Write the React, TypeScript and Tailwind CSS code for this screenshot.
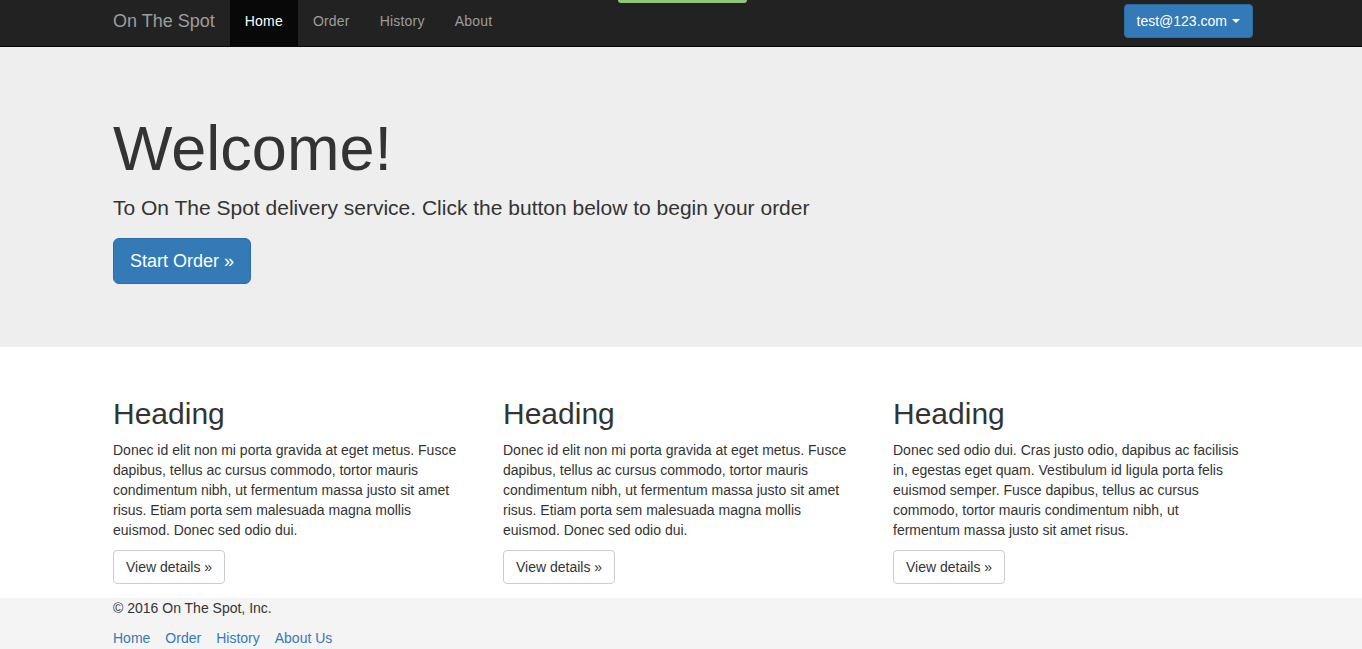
const navLinks = ['Home', 'Order', 'History', 'About'];

const colA = [
  'Donec id elit non mi porta gravida at eget metus. Fusce',
  'dapibus, tellus ac cursus commodo, tortor mauris',
  'condimentum nibh, ut fermentum massa justo sit amet',
  'risus. Etiam porta sem malesuada magna mollis',
  'euismod. Donec sed odio dui.',
];

const colB = [
  'Donec sed odio dui. Cras justo odio, dapibus ac facilisis',
  'in, egestas eget quam. Vestibulum id ligula porta felis',
  'euismod semper. Fusce dapibus, tellus ac cursus',
  'commodo, tortor mauris condimentum nibh, ut',
  'fermentum massa justo sit amet risus.',
];

const columns = [colA, colA, colB];

const footerLinks = ['Home', 'Order', 'History', 'About Us'];

export default function App() {
  return (
    <div className="min-h-[649px] bg-white text-[#333] font-['Liberation_Sans',Arial,sans-serif] text-[14px] leading-[20px]">
      {/* Navbar */}
      <nav className="relative h-[47px] bg-[#222] border-b border-[#080808]">
        {/* alert peeking out from above */}
        <div className="absolute left-[618px] top-0 w-[129px] h-[3px] bg-[#93c47d] rounded-b-[3px]" />
        <div className="ml-[113px] w-[1140px] h-[46px] flex items-start justify-between">
          <div className="flex h-full">
            <a className="text-[18px] leading-[20px] pt-[11px] text-[#9d9d9d] pr-[15px]">On The Spot</a>
            <ul className="flex h-full">
              {navLinks.map((link, i) => (
                <li
                  key={link}
                  className={
                    i === 0
                      ? 'h-full px-[15px] pt-[11px] tracking-[0.2px] bg-[#080808] text-white'
                      : 'h-full px-[15px] pt-[11px] tracking-[0.2px] text-[#9d9d9d]'
                  }
                >
                  {link}
                </li>
              ))}
            </ul>
          </div>
          <button className="mt-[4px] h-[34px] px-[12px] flex items-center gap-[5px] bg-[#337ab7] border border-[#2e6da4] rounded-[4px] text-white text-[14px]">
            test@123.com
            <span className="inline-block w-0 h-0 border-l-[4px] border-r-[4px] border-t-[4px] border-l-transparent border-r-transparent border-t-white" />
          </button>
        </div>
      </nav>

      {/* Jumbotron */}
      <div className="bg-[#eee] pt-[47px] pb-[48px] mb-[30px]">
        <div className="ml-[113px] w-[1140px]">
          <h1 className="mt-[20px] mb-[10px] text-[63px] leading-[69px]">Welcome!</h1>
          <p className="text-[21px] leading-[30px] mb-[15px]">
            To On The Spot delivery service. Click the button below to begin your order
          </p>
          <div className="mb-[15px]">
            <button className="h-[46px] px-[16px] bg-[#337ab7] border border-[#2e6da4] rounded-[6px] text-white text-[18px] leading-[24px]">
              Start Order »
            </button>
          </div>
        </div>
      </div>

      {/* Columns */}
      <div className="ml-[113px] w-[1140px] grid grid-cols-3 gap-[30px]">
        {columns.map((lines, i) => (
          <div key={i} className="w-[360px]">
            <h2 className="mt-[20px] mb-[10px] text-[30px] leading-[33px]">Heading</h2>
            <p className="mb-[10px] whitespace-nowrap">
              {lines.map((line, j) => (
                <span key={j} className="block">
                  {line}
                </span>
              ))}
            </p>
            <div className="mb-[14px]">
              <button className="h-[34px] px-[12px] bg-white border border-[#ccc] rounded-[4px] text-[#333] text-[14px]">
                View details »
              </button>
            </div>
          </div>
        ))}
      </div>

      {/* Footer */}
      <footer className="bg-[#f4f4f4] h-[51px]">
        <div className="ml-[113px] w-[1140px]">
          <p className="mb-[10px]">© 2016 On The Spot, Inc.</p>
          <div className="flex gap-[15px]">
            {footerLinks.map((link) => (
              <a key={link} className="text-[#337ab7]">
                {link}
              </a>
            ))}
          </div>
        </div>
      </footer>
    </div>
  );
}
